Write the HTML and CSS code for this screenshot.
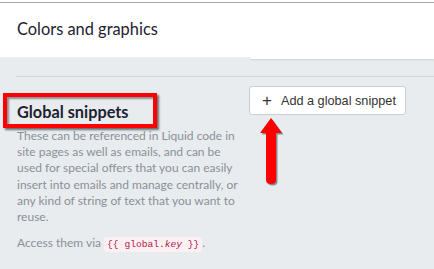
FILE: index.html
```html
<!DOCTYPE html>
<html lang="en">
<head>
    <meta charset="UTF-8">
    <meta name="viewport" content="width=device-width, initial-scale=1.0">
    <title>Global snippets</title>
    <link rel="stylesheet" href="styles.css">
</head>
<body>
    <div class="panel">
        <div class="panel-rule"></div>
        <h2 class="panel-title">Colors and graphics</h2>
    </div>
    <div class="panel-edge"></div>

    <div class="section">
        <div class="section-info">
            <h3 class="section-title">Global snippets</h3>
            <p class="section-text">These can be referenced in Liquid code in site pages as well as emails, and can be used for special offers that you can easily insert into emails and manage centrally, or any kind of string of text that you want to reuse.</p>
            <p class="section-text">Access them via <code class="snippet">{{ global.<em>key</em> }}</code>.</p>
        </div>
        <div class="section-actions">
            <button type="button" class="btn">
                <span class="btn-icon">+</span>
                Add a global snippet
            </button>
        </div>

        <!-- annotation overlay -->
        <div class="highlight-box"></div>
        <svg class="arrow" width="32" height="72" viewBox="0 0 32 72">
            <path d="M16 2 L27 17 L21 17 L21 64 Q21 68 16 68 Q11 68 11 64 L11 17 L5 17 Z" fill="#3a3a3a" opacity="0.55" transform="translate(1.5 1.5)"/>
            <path d="M16 2 L27 17 L21 17 L21 64 Q21 68 16 68 Q11 68 11 64 L11 17 L5 17 Z" fill="#ff0000"/>
        </svg>
    </div>
</body>
</html>
```

FILE: styles.css
```css
body {
    font-family: 'Lato', 'Liberation Sans', sans-serif;
    background-color: #e9ecef;
    color: #1d2230;
    margin: 0;
    padding: 0;
}
.panel {
    background-color: #fff;
    height: 57px;
    display: flex;
    flex-direction: column;
}
.panel-rule {
    height: 1px;
    margin-top: 2px;
    background-color: #a9a9a9;
}
.panel-title {
    margin: 0;
    padding: 16px 17px 0;
    font-size: 16.4px;
    font-weight: 400;
    color: #1d2230;
}
.panel-edge {
    margin-left: 250px;
    height: 2px;
    background-color: #fff;
    border-radius: 0 0 0 3px;
    box-shadow: 0 1px 2px rgba(0, 0, 0, 0.12);
}
.section {
    position: relative;
    display: flex;
    margin: 17px 0 0 16px;
    padding: 9px 0 20px;
    border-top: 1px solid #cfd6de;
    border-bottom: 1px solid #cfd6de;
}
.section-info {
    width: 222px;
    padding-left: 1px;
}
.section-title {
    margin: 16px 0 6px;
    font-size: 16.3px;
    font-weight: 700;
    line-height: 20px;
    color: #1d2230;
}
.section-text {
    margin: 0 0 10px;
    font-size: 12px;
    line-height: 16.2px;
    color: #8a9098;
}
.section-text:last-child {
    margin-bottom: 0;
}
.snippet {
    font-family: 'Liberation Mono', monospace;
    font-size: 9.6px;
    color: #b3164a;
    background-color: #fbf1f3;
    padding: 2px 3px;
    border-radius: 3px;
}
.snippet em {
    font-style: italic;
}
.section-actions {
    padding-left: 10px;
}
.btn {
    display: flex;
    align-items: center;
    gap: 9px;
    height: 29px;
    padding: 0 9px 0 12px;
    background-color: #fff;
    border: 1px solid #c9ced3;
    border-radius: 3px;
    font-family: 'Liberation Sans', sans-serif;
    font-size: 12.7px;
    color: #333;
    cursor: pointer;
}
.btn-icon {
    font-size: 17px;
    line-height: 1;
    color: #333;
}
.highlight-box {
    position: absolute;
    left: -13px;
    top: 16px;
    width: 146px;
    height: 27px;
    border: 4px solid #f00;
    box-shadow: 2px 2px 2px rgba(0, 0, 0, 0.55), inset 2px 2px 2px rgba(0, 0, 0, 0.4);
}
.arrow {
    position: absolute;
    left: 239px;
    top: 39px;
}
```
